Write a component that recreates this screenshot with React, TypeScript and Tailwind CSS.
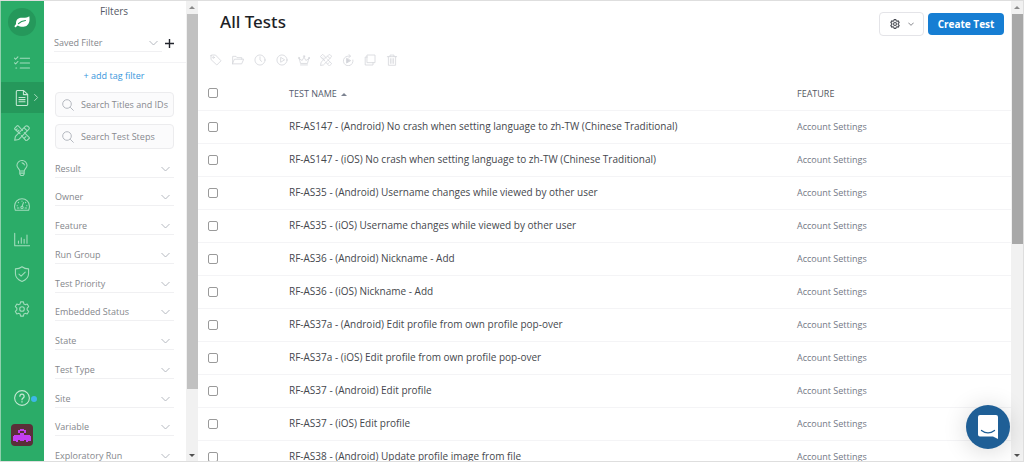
import React, { useState } from 'react';

const FILTERS = [
  'Result',
  'Owner',
  'Feature',
  'Run Group',
  'Test Priority',
  'Embedded Status',
  'State',
  'Test Type',
  'Site',
  'Variable',
  'Exploratory Run',
];

const TESTS = [
  'RF-AS147 - (Android) No crash when setting language to zh-TW (Chinese Traditional)',
  'RF-AS147 - (iOS) No crash when setting language to zh-TW (Chinese Traditional)',
  'RF-AS35 - (Android) Username changes while viewed by other user',
  'RF-AS35 - (iOS) Username changes while viewed by other user',
  'RF-AS36 - (Android) Nickname - Add',
  'RF-AS36 - (iOS) Nickname - Add',
  'RF-AS37a - (Android) Edit profile from own profile pop-over',
  'RF-AS37a - (iOS) Edit profile from own profile pop-over',
  'RF-AS37 - (Android) Edit profile',
  'RF-AS37 - (iOS) Edit profile',
  'RF-AS38 - (Android) Update profile image from file',
];

type IconProps = { className?: string; children?: React.ReactNode };

const Icon: React.FC<IconProps> = ({ className = 'size-4', children }) => (
  <svg
    className={className}
    viewBox="0 0 18 18"
    fill="none"
    stroke="currentColor"
    strokeWidth="1.2"
    strokeLinecap="round"
    strokeLinejoin="round"
    aria-hidden="true"
  >
    {children}
  </svg>
);

const toolsShape = (
  <>
    <path d="M6.900 9.900 1 4.800a1 1 0 0 1 0-1.400L3.400 1a1 1 0 0 1 1.400 0L9.600 6.200M11.600 8.600l5.400 5.200a1 1 0 0 1 0 1.400L14.600 17.400a1 1 0 0 1-1.400 0L8.400 12M4.200 7.200l1.400-1.400M11.800 14.600l1.600-1.600M2.800 5.200l.8-.8" />
    <path d="M13 1.400a1.800 1.800 0 0 1 2.500 0l1.100 1.100a1.800 1.800 0 0 1 0 2.500L5.200 16.400l-4.400.8.800-4.400zM11.400 3.200l3.500 3.500" />
  </>
);

const gearShape = (
  <>
    <path d="M7.400 1h3.200l.5 2.300 1.500.8 2.200-.7 1.700 2.900-1.700 1.600v2.200l1.700 1.600-1.700 2.900-2.200-.7-1.500.8-.5 2.300H7.400l-.5-2.300-1.500-.8-2.200.7-1.700-2.900 1.700-1.600V7.900L1.500 6.300l1.700-2.900 2.200.7 1.500-.8z" />
    <circle cx="9" cy="9" r="2.600" />
  </>
);

const NAV = [
  {
    label: 'Runs',
    shape: <path d="M.6 3.500l1.300 1.300L4.400 2M.6 8.800l1.300 1.300 2.500-2.800M2.100 14.600h.9M7 3.600h10.500M7 9h10.500M7 14.600h10.500" />,
  },
  {
    label: 'Tests',
    shape: (
      <path d="M3.800.6h7L15.400 5v11.200a1.200 1.200 0 0 1-1.200 1.200H3.800a1.200 1.200 0 0 1-1.200-1.200V1.800A1.200 1.200 0 0 1 3.800.6zM10.600.8v4.400h4.600M5.600 8.400h6.800M5.600 10.800h6.800M5.600 13.200h6.800" />
    ),
  },
  { label: 'Tools', shape: toolsShape },
  {
    label: 'Ideas',
    shape: (
      <path d="M6.500 12.400c0-2.400-3.200-3.400-3.200-6.600A5.500 5.500 0 0 1 9 .6a5.500 5.500 0 0 1 5.700 5.200c0 3.200-3.200 4.200-3.200 6.600zM6.700 14.800h4.600M6.500 12.400v3.400l1.200 1.600h2.600l1.200-1.600v-3.400M9 3.200a2.900 2.900 0 0 1 2.700 2.300" />
    ),
  },
  {
    label: 'Dashboard',
    shape: (
      <>
        <path d="M1.500 16C.9 14.600.6 13.200.6 11.400a8.400 8.400 0 0 1 16.800 0c0 1.800-.3 3.200-.9 4.600z" />
        <path d="M9 5.600v.4M4.800 7.200l.3.300M3.400 11h.4M14.200 11h.4M13.200 7.200l-.3.300M3.800 13.600h1.800M12.400 13.600h1.800M10.600 7.400 9.200 11.400" />
        <circle cx="9" cy="12.800" r="1.300" />
      </>
    ),
  },
  { label: 'Reports', shape: <path d="M.8 2.500v14h16.700M5 13.800v-2.400M8.200 13.800V7.600M11.400 13.800V9.400M14.600 13.800V4.600" /> },
  {
    label: 'Quality',
    shape: <path d="M9 .8c2 1.600 4.600 2.400 7.400 2.400v5.200c0 4.400-3 7.200-7.400 9-4.400-1.800-7.400-4.600-7.400-9V3.200C4.400 3.200 7 2.400 9 .8zM5.600 9.200l2.400 2.300 4.600-4.700" />,
  },
  { label: 'Settings', shape: gearShape },
];

const ACTIONS = [
  {
    label: 'Tag',
    shape: (
      <>
        <path d="M1.500 2.500v5.800l8.700 8.200 6.300-6.300-8.200-8.700H2.500a1 1 0 0 0-1 1z" />
        <circle cx="5.200" cy="5.200" r="1.200" />
      </>
    ),
  },
  { label: 'Move', shape: <path d="M1 14.800V3.500h5l1.500 2h7.200v2.300M1 14.800h13.500L17.600 7.800H4.200z" /> },
  {
    label: 'Schedule',
    shape: (
      <>
        <circle cx="9" cy="9" r="7.600" />
        <path d="M9 4.200V9l2.600 2.200" />
      </>
    ),
  },
  {
    label: 'Run',
    shape: (
      <>
        <circle cx="9" cy="9" r="7.600" />
        <path d="M7 5.600v6.800L12.400 9z" />
      </>
    ),
  },
  {
    label: 'Prioritize',
    shape: (
      <>
        <path d="M3.600 13.600 2 7l4.200 2.800L9 4.600l2.800 5.200L16 7l-1.600 6.600zM3.800 16.400h10.400" />
        <circle cx="9" cy="3.400" r="1" />
        <circle cx="1.400" cy="6" r="1" />
        <circle cx="16.600" cy="6" r="1" />
      </>
    ),
  },
  { label: 'Edit', shape: toolsShape },
  {
    label: 'Rerun',
    shape: (
      <>
        <path d="M16.400 9A7.200 7.200 0 1 1 9 3.200h3.400M10 .4l2.800 2.800L10 5.800" />
        <path d="M6.800 6.800v6.800l5.800-3.400z" fill="currentColor" />
      </>
    ),
  },
  { label: 'Duplicate', shape: <path d="M5 1.500h11.500V13H5zM5 4.500H1.800v12h11.700V13" /> },
  {
    label: 'Delete',
    shape: <path d="M2 4h14M6 4V1.600h6V4M3.600 4v12.900h10.800V4M6.600 7v7M9 7v7M11.400 7v7" />,
  },
];

const Chevron: React.FC<{ className?: string }> = ({ className = 'w-[9px] h-[6px]' }) => (
  <svg className={className} viewBox="0 0 9 6" fill="none" stroke="currentColor" strokeWidth="1" aria-hidden="true">
    <path d="M.5 1 4.500 5 8.500 1" />
  </svg>
);

const Sidebar: React.FC = () => (
  <nav className="flex w-11 shrink-0 flex-col items-center border-l border-[#8fd0ac] bg-[#2bac68] pr-px text-[#a3dcbd]">
    <a href="#" aria-label="Home" className="mt-[7px] flex size-7 shrink-0 items-center justify-center rounded-full bg-[#25985b]">
      <svg className="h-3 w-4" viewBox="0 0 16 12" aria-hidden="true">
        <path d="M15.300.2c.8 5-.4 9.400-4.800 10.400-2.700.6-5-.2-6.800-1.100-.8.500-1.300 1.200-1.900 1.900L.3 10.300c.8-.8 1.400-1.400 1.700-2.200C1.700 3 4.600 1.600 8.200 1.700c3 .1 5.400-.2 7.100-1.500z" fill="#fff" />
        <path d="M4.500 7.600c2-2 4-2.800 6.900-3.100" fill="none" stroke="#25985b" strokeWidth="1.200" strokeLinecap="round" />
      </svg>
    </a>
    <div className="-mr-px mt-[11px] flex h-[278px] shrink-0 flex-col justify-between self-stretch">
      {NAV.map((item) =>
        item.label === 'Tests' ? (
          <a key={item.label} href="#" aria-label={item.label} className="relative flex h-[31px] items-center justify-center bg-[#25985b] pr-px text-[#c5e8d4]">
            <Icon>{item.shape}</Icon>
            <Chevron className="absolute right-1 h-[5px] w-2 -rotate-90" />
          </a>
        ) : (
          <a key={item.label} href="#" aria-label={item.label} className="flex h-[31px] items-center justify-center pr-px">
            <Icon>{item.shape}</Icon>
          </a>
        )
      )}
    </div>
    <div className="mt-auto mb-[15px] flex flex-col items-center gap-[18px]">
      <a href="#" aria-label="Help" className="relative text-[#c5e8d4]">
        <Icon>
          <circle cx="9" cy="9" r="8.300" />
          <path d="M6.600 7a2.400 2.400 0 1 1 3.600 2.100c-.8.500-1.200.9-1.200 1.900M9 13.200v.4" strokeWidth="1.400" />
        </Icon>
        <span className="absolute -right-[7px] bottom-1 size-1.5 rounded-full bg-[#3db7e8]" />
      </a>
      <button type="button" aria-label="Account" className="flex size-[22px] items-center justify-center rounded-sm bg-[#5a2f38]">
        <svg className="h-[13px] w-[18px]" viewBox="0 0 18 13" fill="#c23ff0" shapeRendering="crispEdges" aria-hidden="true">
          <path d="M7 0h4v1h2v3h-2V2H7v2H5V1h2zM7 4h4v2h6v1h1v5h-3v1h-2v-2h-2v1H7v-1H5v2H3v-1H0V7h1V6h6z" />
        </svg>
      </button>
    </div>
  </nav>
);

const ScrollBar: React.FC<{ thumb: string }> = ({ thumb }) => (
  <div className="flex w-3 shrink-0 flex-col items-center bg-[#f1f1f1]" aria-hidden="true">
    <span className="mt-[5px] mb-[5px] border-x-3 border-b-3 border-x-transparent border-b-[#8b8b8b]" />
    <span className={thumb} />
    <span className="mt-auto mb-1 border-x-3 border-t-3 border-x-transparent border-t-[#505050]" />
  </div>
);

const SearchBox: React.FC<{ label: string }> = ({ label }) => (
  <label className="flex h-[25px] items-center gap-[7px] rounded-sm border border-[#ececee] bg-[#fbfbfc] pl-1.5">
    <svg className="size-3 shrink-0 text-[#b5b9c0]" viewBox="0 0 12 12" fill="none" stroke="currentColor" aria-hidden="true">
      <circle cx="5" cy="5" r="4.300" />
      <path d="M8.200 8.200l3.400 3.400" />
    </svg>
    <input type="text" aria-label={label} placeholder={label} className="w-full min-w-0 bg-transparent text-[9px] outline-none placeholder:text-[#87898f]" />
  </label>
);

const FilterPanel: React.FC = () => (
  <aside className="flex w-[154px] shrink-0">
    <div className="flex min-w-0 flex-1 flex-col overflow-hidden text-[9px] text-[#85878c]">
      <h2 className="mt-0.5 pr-0.5 text-center text-[10px] leading-4 text-[#555a66]">Filters</h2>
      <div className="mt-4 flex items-center border-b border-[#f3f3f5] pr-3 pb-2.5 pl-2.5">
        <button type="button" className="flex h-[17px] flex-1 items-center justify-between border-b border-[#f0f0f2] pr-1">
          Saved Filter
          <Chevron className="h-[6px] w-[9px] text-[#b5b9c0]" />
        </button>
        <button type="button" aria-label="Add filter" className="ml-[3px] text-[#22242c]">
          <svg className="size-[9px]" viewBox="0 0 9 9" stroke="currentColor" strokeWidth="1.400" aria-hidden="true">
            <path d="M4.500 0v9M0 4.500h9" />
          </svg>
        </button>
      </div>
      <a href="#" className="mt-[5px] pr-0.5 text-center leading-4 text-[#3796dc]">+ add tag filter</a>
      <div className="mt-2 flex flex-col gap-[7px] pr-3 pl-[11px]">
        <SearchBox label="Search Titles and IDs" />
        <SearchBox label="Search Test Steps" />
      </div>
      <div className="grid h-[316px] shrink-0 auto-rows-fr pr-3 pl-[11px]">
        {FILTERS.map((name) => (
          <button key={name} type="button" className="flex items-end justify-between border-b border-[#f0f0f2] pr-1 text-left leading-4">
            {name}
            <Chevron className="mb-[5px] h-[6px] w-[9px] text-[#b5b9c0]" />
          </button>
        ))}
      </div>
    </div>
    <ScrollBar thumb="h-[375px] w-[11px] bg-[#c1c1c1]" />
  </aside>
);

const Check: React.FC<{ label: string; checked: boolean; onChange: () => void }> = ({ label, checked, onChange }) => (
  <input
    type="checkbox"
    aria-label={label}
    checked={checked}
    onChange={onChange}
    className="block size-2.5 appearance-none rounded-[2px] border border-[#9a9a9a] bg-white checked:bg-[#167ed8]"
  />
);

const App: React.FC = () => {
  const [selected, setSelected] = useState<string[]>([]);

  const toggle = (test: string) => {
    setSelected((prev) => (prev.includes(test) ? prev.filter((t) => t !== test) : [...prev, test]));
  };

  const allSelected = selected.length === TESTS.length;

  return (
    <div className="relative flex h-screen overflow-hidden border-y border-r border-[#dedede] bg-white font-['Open_Sans','Noto_Sans',sans-serif]">
      <Sidebar />
      <FilterPanel />

      <main className="min-w-0 flex-1 overflow-hidden">
        <header className="flex items-start pt-[9px] pr-[7px] pl-[22px]">
          <h1 className="font-['Noto_Sans','Open_Sans',sans-serif] text-[17px] leading-6 font-medium text-[#1d1f27]">All Tests</h1>
          <div className="mt-0.5 ml-auto flex items-start gap-1">
            <button type="button" aria-label="Options" className="flex h-6 w-[45px] items-center justify-center gap-2 rounded-sm border border-[#e4e4e8] text-[#4a4d55]">
              <Icon className="size-2.5">
                <g strokeWidth="2">{gearShape}</g>
              </Icon>
              <Chevron className="h-1 w-1.5" />
            </button>
            <button type="button" className="mt-px h-[22px] w-[76px] rounded-sm bg-[#167ed3] text-[10px] font-bold whitespace-nowrap text-white">
              Create Test
            </button>
          </div>
        </header>

        <div className="mt-[18px] flex gap-2.5 pl-3 text-[#d4d5da]">
          {ACTIONS.map((action) => (
            <button key={action.label} type="button" aria-label={action.label}>
              <Icon className="size-3">{action.shape}</Icon>
            </button>
          ))}
        </div>

        <table className="mt-[11px] w-full table-fixed border-collapse text-left">
          <thead>
            <tr className="h-[33px] border-b border-[#f4f4f6] text-[9px]">
              <th className="w-[91px] pl-2.5">
                <Check label="Select all" checked={allSelected} onChange={() => setSelected(allSelected ? [] : TESTS)} />
              </th>
              <th className="font-medium text-[#555c6e]">
                TEST NAME
                <span className="ml-1 inline-block border-x-3 border-b-3 border-x-transparent border-b-[#7d8391] align-middle" />
              </th>
              <th className="w-[214px] font-normal text-[#555861]">FEATURE</th>
            </tr>
          </thead>
          <tbody>
            {TESTS.map((test) => (
              <tr key={test} className="h-[33px] border-b border-[#f4f4f6]">
                <td className="pl-2.5">
                  <Check label={test} checked={selected.includes(test)} onChange={() => toggle(test)} />
                </td>
                <td className="text-[10px] whitespace-nowrap text-[#45474d]">{test}</td>
                <td className="text-[9px] text-[#737885]">Account Settings</td>
              </tr>
            ))}
          </tbody>
        </table>
      </main>
      <ScrollBar thumb="h-[230px] w-[11px] bg-[#a8a8a8]" />

      {/* Support chat launcher */}
      <button type="button" aria-label="Open chat" className="absolute right-[13px] bottom-3 flex size-11 items-center justify-center rounded-full bg-[#1f5f96] shadow-[0_2px_24px_rgba(0,0,0,0.16)]">
        <svg className="h-6 w-5" viewBox="0 0 20 24" aria-hidden="true">
          <path d="M2 0h16a2 2 0 0 1 2 2v22l-5-2.500H2a2 2 0 0 1-2-2V2a2 2 0 0 1 2-2z" fill="#fff" />
          <path d="M3.500 15.500c4 3 9 3 13 0" fill="none" stroke="#1f5f96" strokeWidth="1.300" strokeLinecap="round" />
        </svg>
      </button>
    </div>
  );
};

export default App;
